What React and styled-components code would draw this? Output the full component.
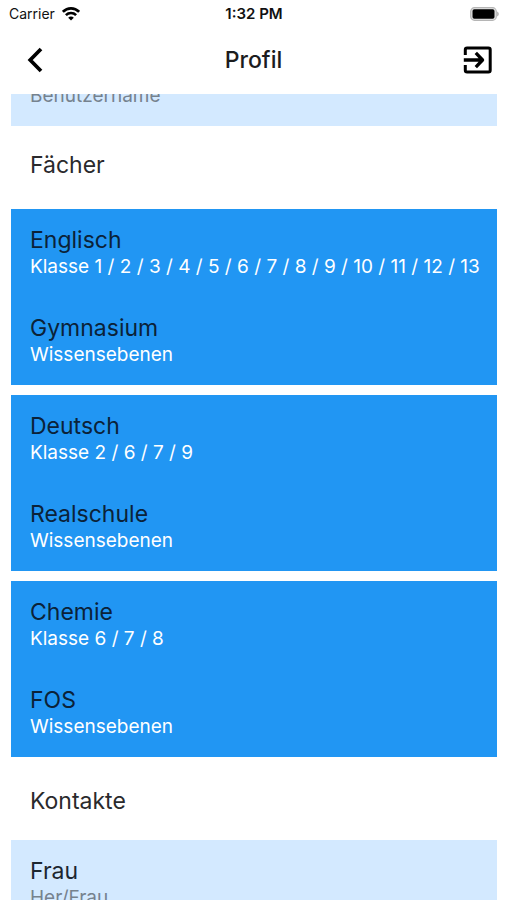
import React from "react";
import styled, { createGlobalStyle } from "styled-components";

const GlobalStyle = createGlobalStyle`
  * { box-sizing: border-box; }
  body { margin: 0; background: #fff; font-family: Inter, "Liberation Sans", sans-serif; color: #1c1c1e; }
  h1, h2, h3, p { margin: 0; font-weight: 400; }
`;

const Screen = styled.div`
  height: 100vh;
  display: flex;
  flex-direction: column;
  overflow: hidden;
`;

const StatusBar = styled.div`
  flex: none;
  height: 28px;
  padding: 0 8px 0 9px;
  display: grid;
  grid-template-columns: 1fr auto 1fr;
  align-items: center;
  font-size: 14px;
  line-height: 28px;
  color: #111;
`;

const Carrier = styled.span`
  display: flex;
  align-items: center;
  gap: 7px;
`;

const Clock = styled.time`
  font-size: 15px;
  font-weight: 600;
`;

const Battery = styled.svg`
  justify-self: end;
`;

const Header = styled.header`
  flex: none;
  height: 66px;
  padding: 0 12px 2px;
  display: grid;
  grid-template-columns: 1fr auto 1fr;
  align-items: center;
`;

const Title = styled.h1`
  font-size: 23px;
  line-height: 32px;
  font-weight: 500;
`;

const IconButton = styled.button`
  border: 0;
  padding: ${(p) => (p.$end ? "0" : "0 8px")};
  background: none;
  color: #000;
  display: flex;
  justify-self: ${(p) => (p.$end ? "end" : "start")};
`;

const Content = styled.main`
  flex: 1;
  min-height: 0;
  overflow: hidden;
  display: flex;
  flex-direction: column;
  padding: 0 10px 0 11px;
`;

const Card = styled.section`
  flex: none;
  background: ${(p) => (p.$light ? "#d3e9ff" : "#2196f3")};
  color: ${(p) => (p.$light ? "#1c2630" : "#0b2238")};
  padding: 16px 10px 18px 19px;
  display: flex;
  flex-direction: column;
  gap: 34px;
`;

const ClippedCard = styled(Card)`
  height: 32px;
  padding-top: 0;
  overflow: hidden;
  justify-content: flex-end;
`;

const CardList = styled.div`
  flex: none;
  display: flex;
  flex-direction: column;
  gap: 10px;
`;

const SectionTitle = styled.h2`
  flex: none;
  padding: ${(p) => (p.$low ? "28px 19px 23px" : "23px 19px 28px")};
  font-size: 23px;
  line-height: 32px;
  color: #2a2a2c;
`;

const Name = styled.h3`
  font-size: 23px;
  line-height: 30px;
`;

const Detail = styled.p`
  flex: none;
  font-size: 19px;
  line-height: 24px;
  color: ${(p) => (p.$muted ? "#76828e" : "#fff")};
`;

const subjects = [
  { name: "Englisch", classes: "Klasse 1 / 2 / 3 / 4 / 5 / 6 / 7 / 8 / 9 / 10 / 11 / 12 / 13", school: "Gymnasium" },
  { name: "Deutsch", classes: "Klasse 2 / 6 / 7 / 9", school: "Realschule" },
  { name: "Chemie", classes: "Klasse 6 / 7 / 8", school: "FOS" },
];

function Entry({ name, detail, muted }) {
  return (
    <div>
      <Name>{name}</Name>
      <Detail $muted={muted}>{detail}</Detail>
    </div>
  );
}

export default function App() {
  return (
    <Screen>
      <GlobalStyle />
      <StatusBar>
        <Carrier>
          Carrier
          <svg width="18" height="14" viewBox="0 0 18 14" fill="none" stroke="#000" strokeWidth="2.6" aria-hidden="true">
            <path d="M.9 4.800C5.500.2 12.500.2 17.100 4.800M3.900 8.100c2.800-2.800 7.400-2.800 10.200 0" />
            <path d="M9 13.500 6.200 10.700c1.600-1.500 4-1.500 5.600 0Z" fill="#000" stroke="none" />
          </svg>
        </Carrier>
        <Clock>1:32 PM</Clock>
        <Battery width="29" height="14" viewBox="0 0 29 14" aria-hidden="true">
          <rect x=".7" y=".7" width="25.600" height="12.600" rx="3.800" fill="#e4e4e4" stroke="#b5b5b5" strokeWidth="1.200" />
          <rect x="2.500" y="2.300" width="22" height="9.400" rx="1.800" fill="#000" />
          <path d="M27.200 4.500c2 .8 2 4.200 0 5Z" fill="#aaa" />
        </Battery>
      </StatusBar>
      <Header>
        <IconButton type="button" aria-label="Zurück">
          <svg width="30" height="30" viewBox="0 0 30 30" fill="none" stroke="currentColor" strokeWidth="3.700">
            <path d="M21 4 10.200 15 21 26" />
          </svg>
        </IconButton>
        <Title>Profil</Title>
        <IconButton type="button" aria-label="Abmelden" $end>
          <svg width="36" height="36" viewBox="0 0 24 24" fill="none" stroke="currentColor" strokeWidth="2" strokeLinejoin="round">
            <path d="M4.200 8.700V5.200a1.200 1.200 0 0 1 1.200-1.200h14.200a1.200 1.200 0 0 1 1.200 1.200v13.600a1.200 1.200 0 0 1-1.200 1.200H5.400a1.200 1.200 0 0 1-1.200-1.200v-3.500" />
            <path d="M3.200 12h12.300M11.200 7.300 15.700 12l-4.500 4.700" strokeWidth="2.200" />
          </svg>
        </IconButton>
      </Header>
      <Content>
        <ClippedCard $light>
          <Detail $muted>Benutzername</Detail>
        </ClippedCard>
        <SectionTitle>Fächer</SectionTitle>
        <CardList>
          {subjects.map((s) => (
            <Card key={s.name}>
              <Entry name={s.name} detail={s.classes} />
              <Entry name={s.school} detail="Wissensebenen" />
            </Card>
          ))}
        </CardList>
        <SectionTitle $low>Kontakte</SectionTitle>
        <Card $light>
          <Entry name="Frau" detail="Her/Frau" muted />
        </Card>
      </Content>
    </Screen>
  );
}
